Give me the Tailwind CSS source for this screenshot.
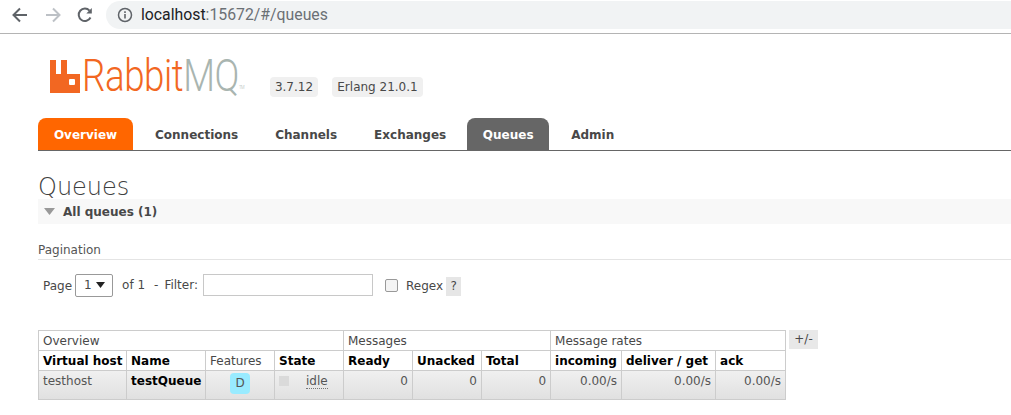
<!DOCTYPE html>
<html><head><meta charset="utf-8"><script src="https://cdn.jsdelivr.net/npm/@tailwindcss/browser@4"></script></head>
<body class="bg-white overflow-hidden h-[415px] font-['DejaVu_Sans',sans-serif] text-[12px] text-[#484848]">
<div class="h-[34px] border-b border-[#b4b4b4] flex items-start">
  <div class="flex items-center h-[30px] w-[106px] shrink-0">
    <svg class="ml-[11px]" width="18" height="18" viewBox="0 0 18 18" fill="none" stroke="#5f6368" stroke-width="2"><path d="M16 9H3M9 2.5 2.5 9 9 15.500"/></svg>
    <svg class="ml-[15px]" width="18" height="18" viewBox="0 0 18 18" fill="none" stroke="#bdc1c6" stroke-width="2"><path d="M2 9h13M9 2.500 15.500 9 9 15.500"/></svg>
    <svg class="ml-[14px]" width="18" height="18" viewBox="0 0 18 18" fill="none" stroke="#5f6368" stroke-width="2"><path d="M14.500 11.500A6.200 6.200 0 1 1 13.500 4.600"/><path d="M15.800 2v5.500h-5.500z" fill="#5f6368" stroke="none"/></svg>
  </div>
  <div class="flex-1 mt-px h-[28px] bg-[#f1f3f4] rounded-l-[14px] flex items-center pl-[11px] font-['Roboto',sans-serif] text-[15.800px]">
    <svg width="16" height="16" viewBox="0 0 16 16" fill="none"><circle cx="8" cy="8" r="6.500" stroke="#5f6368" stroke-width="1.500"/><path d="M7.200 7h1.600v4.500H7.200zM7.200 4.300h1.600v1.600H7.200z" fill="#5f6368"/></svg>
    <span class="ml-[8px] text-[#202124]">localhost</span><span class="text-[#6b7075]">:15672/#/queues</span>
  </div>
</div>

<div class="pl-[38px]">
  <div class="h-[84px] flex items-start">
    <svg class="mt-[26px] ml-[12px] shrink-0" width="30" height="33" viewBox="0 0 30 33"><path fill="#f26722" d="M0 0h6v14h5V0h6v14h13v19H0z"/><rect x="19" y="19" width="6" height="6" rx="1" fill="#fff"/></svg>
    <div class="ml-[2px] w-[174px] mt-[16px] text-[45px] leading-[52px] font-['Roboto',sans-serif] font-light scale-x-[0.815] origin-left whitespace-nowrap tracking-[-0.5px]"><span class="text-[#f26722]">Rabbit</span><span class="text-[#a9b5b0]">MQ</span><sup class="text-[5px] text-[#a9b5b0]">TM</sup></div>
    <span class="ml-[14px] mt-[43px] h-[20px] w-[48px] text-center leading-[20px] rounded-[4px] bg-[#f0f0f0]">3.7.12</span>
    <span class="ml-[14px] mt-[43px] h-[20px] w-[91px] text-center leading-[20px] rounded-[4px] bg-[#f0f0f0]">Erlang 21.0.1</span>
  </div>

  <div class="h-[33px] border-b border-[#666] flex items-stretch gap-[6px] font-bold text-[12px] leading-[34px]">
    <div class="w-[95px] text-center rounded-t-[8px] bg-[#ff6600] text-white">Overview</div>
    <div class="pl-[16px] pr-[15px]">Connections</div>
    <div class="pl-[16px] pr-[15px]">Channels</div>
    <div class="pl-[16px] pr-[15px]">Exchanges</div>
    <div class="w-[82px] text-center rounded-t-[8px] bg-[#666] text-white">Queues</div>
    <div class="px-[16px]">Admin</div>
  </div>

  <h1 class="mt-[21px] text-[24px] leading-[30px] font-extralight text-[#404040]">Queues</h1>
  <div class="h-[25px] -mt-[3px] bg-[#f8f8f8] flex items-center pl-[6px] font-bold">
    <svg width="11" height="7" viewBox="0 0 11 7"><path d="M0 0h11L5.500 7z" fill="#999"/></svg>
    <span class="ml-[8px]">All queues (1)</span>
  </div>

  <div class="mt-[17px] h-[19px] border-b border-[#e4e4e4] text-[#555]">Pagination</div>

  <div class="h-[50px] flex items-center pl-[5px]">
    <span class="mt-[2px]">Page</span>
    <div class="ml-[3px] w-[38px] h-[23px] border border-[#999] rounded-[2px] flex items-center justify-between pl-[8px] pr-[7px]"><span>1</span><svg width="9" height="6" viewBox="0 0 9 6"><path d="M0 0h9L4.500 6z" fill="#222"/></svg></div>
    <span class="ml-[9px]">of 1</span>
    <span class="ml-[9px]">-</span>
    <span class="ml-[6px]">Filter:</span>
    <div class="ml-[5px] w-[170px] h-[22px] border border-[#c8c8c8]"></div>
    <div class="ml-[12px] w-[13px] h-[13px] rounded-[2px] border border-[#999] bg-[#f4f4f4]"></div>
    <span class="ml-[8px] mt-[2px]">Regex</span>
    <span class="ml-[3px] mt-[2px] w-[15px] h-[19px] text-center leading-[19px] bg-[#e6e6e6]">?</span>
  </div>

  <div class="mt-[20px] flex items-start">
    <table class="table-fixed border-collapse w-[747px] border border-[#ccc] leading-[14px]">
      <colgroup><col class="w-[88px]"><col class="w-[79px]"><col class="w-[69px]"><col class="w-[69px]"><col class="w-[69px]"><col class="w-[69px]"><col class="w-[69px]"><col class="w-[71px]"><col class="w-[94px]"><col class="w-[70px]"></colgroup>
      <thead>
        <tr class="h-[20px] text-left">
          <th colspan="4" class="border border-[#ccc] px-[4px] font-normal">Overview</th>
          <th colspan="3" class="border border-[#ccc] px-[4px] font-normal">Messages</th>
          <th colspan="3" class="border border-[#ccc] px-[4px] font-normal">Message rates</th>
        </tr>
        <tr class="h-[20px] text-left font-bold text-black whitespace-nowrap">
          <th class="border border-[#ccc] px-[4px]">Virtual host</th>
          <th class="border border-[#ccc] px-[4px]">Name</th>
          <th class="border border-[#ccc] px-[4px] font-normal text-[#484848]">Features</th>
          <th class="border border-[#ccc] px-[4px]">State</th>
          <th class="border border-[#ccc] px-[4px]">Ready</th>
          <th class="border border-[#ccc] px-[4px]">Unacked</th>
          <th class="border border-[#ccc] px-[4px]">Total</th>
          <th class="border border-[#ccc] px-[4px]">incoming</th>
          <th class="border border-[#ccc] px-[4px]">deliver / get</th>
          <th class="border border-[#ccc] px-[4px]">ack</th>
        </tr>
      </thead>
      <tbody>
        <tr class="h-[29px] align-top bg-linear-to-b from-[#f0f0f0] to-[#e0e0e0] text-[#555]">
          <td class="border border-[#ccc] px-[4px] pt-[3px]">testhost</td>
          <td class="border border-[#ccc] px-[4px] pt-[3px] font-bold text-black">testQueue</td>
          <td class="border border-[#ccc] pt-[2px] text-center"><span class="inline-block w-[20px] h-[21px] leading-[21px] rounded-[4px] bg-[#99ebff]">D</span></td>
          <td class="border border-[#ccc] pl-[4px] pt-[3px]"><div class="flex"><span class="w-[10px] h-[10px] mt-[2px] bg-[#dadada]"></span><span class="ml-[17px] border-b border-dotted border-[#777]">idle</span></div></td>
          <td class="border border-[#ccc] px-[4px] pt-[3px] text-right">0</td>
          <td class="border border-[#ccc] px-[4px] pt-[3px] text-right">0</td>
          <td class="border border-[#ccc] px-[4px] pt-[3px] text-right">0</td>
          <td class="border border-[#ccc] px-[4px] pt-[3px] text-right">0.00/s</td>
          <td class="border border-[#ccc] px-[4px] pt-[3px] text-right">0.00/s</td>
          <td class="border border-[#ccc] px-[4px] pt-[3px] text-right">0.00/s</td>
        </tr>
      </tbody>
    </table>
    <div class="ml-[3px] w-[29px] h-[19px] leading-[19px] text-center bg-[#e8e8e8]">+/-</div>
  </div>
</div>
</body></html>
